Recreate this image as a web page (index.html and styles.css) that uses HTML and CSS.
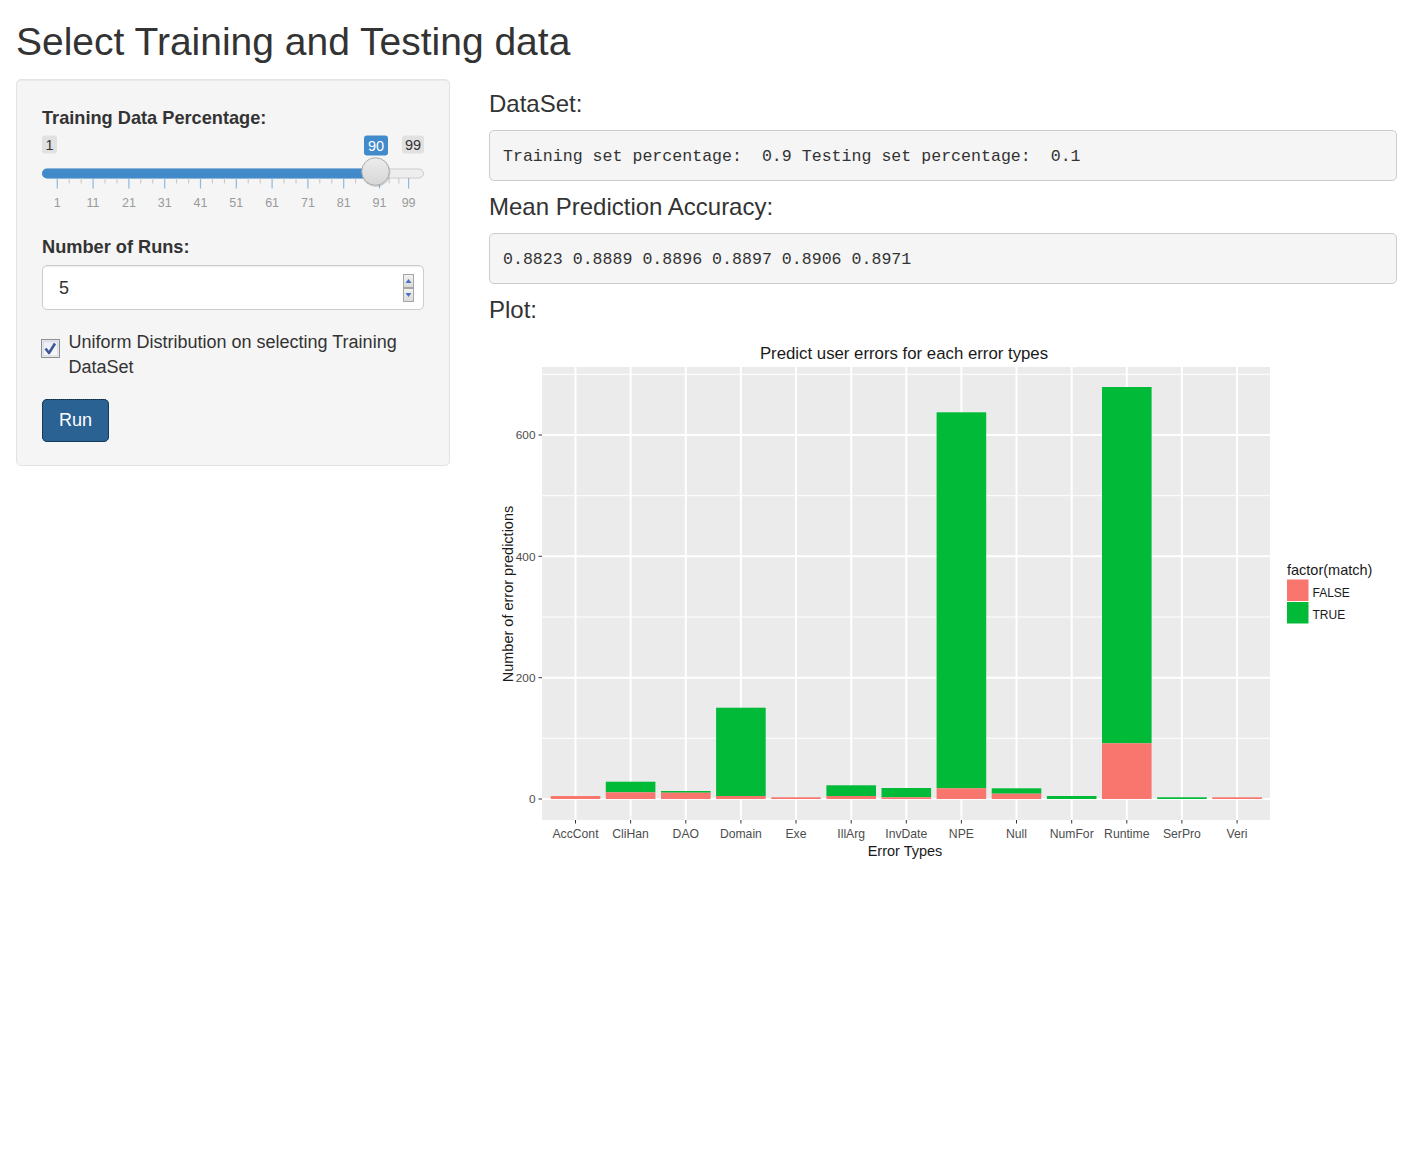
FILE: index.html
```html
<!DOCTYPE html>
<html lang="en">
<head>
<meta charset="utf-8">
<title>Select Training and Testing data</title>
<link rel="stylesheet" href="styles.css">
</head>
<body>
<div class="page">
  <h2 class="title">Select Training and Testing data</h2>
  <div class="layout">
    <aside class="well">
      <div class="label first-label">Training Data Percentage:</div>
      <svg class="slider" width="382" height="84.5" viewBox="42 130.5 382 84.5">
        <defs>
          <linearGradient id="hg" x1="0" y1="0" x2="0" y2="1">
            <stop offset="0" stop-color="#ececec"/>
            <stop offset="1" stop-color="#d6d6d6"/>
          </linearGradient>
        </defs>
        <rect x="42" y="135" width="15" height="18" rx="3" fill="#e1e1e1"/>
        <text x="49.5" y="149.5" class="sl-val">1</text>
        <rect x="364" y="135" width="24" height="20" rx="3" fill="#428bca"/>
        <text x="376" y="150.5" class="sl-val sl-cur">90</text>
        <rect x="402" y="135" width="22" height="18" rx="3" fill="#e1e1e1"/>
        <text x="413" y="149.5" class="sl-val">99</text>
        <rect x="42.5" y="168.5" width="381" height="9" rx="4.5" fill="#eeeeee" stroke="#cccccc"/>
        <rect x="42" y="168" width="336" height="10" rx="5" fill="#428bca"/>
        <g class="minor">
          <line x1="69.2" y1="177.5" x2="69.2" y2="183"/><line x1="81.2" y1="177.5" x2="81.2" y2="183"/>
          <line x1="105" y1="177.5" x2="105" y2="183"/><line x1="117" y1="177.5" x2="117" y2="183"/>
          <line x1="140.8" y1="177.5" x2="140.8" y2="183"/><line x1="152.8" y1="177.5" x2="152.8" y2="183"/>
          <line x1="176.6" y1="177.5" x2="176.6" y2="183"/><line x1="188.6" y1="177.5" x2="188.6" y2="183"/>
          <line x1="212.4" y1="177.5" x2="212.4" y2="183"/><line x1="224.4" y1="177.5" x2="224.4" y2="183"/>
          <line x1="248.2" y1="177.5" x2="248.2" y2="183"/><line x1="260.2" y1="177.5" x2="260.2" y2="183"/>
          <line x1="284" y1="177.5" x2="284" y2="183"/><line x1="296" y1="177.5" x2="296" y2="183"/>
          <line x1="319.8" y1="177.5" x2="319.8" y2="183"/><line x1="331.8" y1="177.5" x2="331.8" y2="183"/>
          <line x1="355.6" y1="177.5" x2="355.6" y2="183"/><line x1="367.6" y1="177.5" x2="367.6" y2="183"/>
          <line x1="389.2" y1="177.5" x2="389.2" y2="183"/><line x1="398.9" y1="177.5" x2="398.9" y2="183"/>
        </g>
        <g class="major">
          <line x1="57.3" y1="177.5" x2="57.3" y2="188"/>
          <line x1="93.1" y1="177.5" x2="93.1" y2="188"/>
          <line x1="128.9" y1="177.5" x2="128.9" y2="188"/>
          <line x1="164.7" y1="177.5" x2="164.7" y2="188"/>
          <line x1="200.5" y1="177.5" x2="200.5" y2="188"/>
          <line x1="236.3" y1="177.5" x2="236.3" y2="188"/>
          <line x1="272.1" y1="177.5" x2="272.1" y2="188"/>
          <line x1="307.9" y1="177.5" x2="307.9" y2="188"/>
          <line x1="343.7" y1="177.5" x2="343.7" y2="188"/>
          <line x1="379.5" y1="177.5" x2="379.5" y2="188"/>
          <line x1="408.6" y1="177.5" x2="408.6" y2="188"/>
        </g>
        <g class="ticklbl">
          <text x="57.3" y="206">1</text>
          <text x="93.1" y="206">11</text>
          <text x="128.9" y="206">21</text>
          <text x="164.7" y="206">31</text>
          <text x="200.5" y="206">41</text>
          <text x="236.3" y="206">51</text>
          <text x="272.1" y="206">61</text>
          <text x="307.9" y="206">71</text>
          <text x="343.7" y="206">81</text>
          <text x="379.5" y="206">91</text>
          <text x="408.6" y="206">99</text>
        </g>
        <circle cx="376" cy="172" r="14.5" fill="rgba(0,0,0,0.12)"/>
        <circle cx="375.5" cy="171" r="13.8" fill="url(#hg)" stroke="#ababab"/>
      </svg>
      <div class="label runs-label">Number of Runs:</div>
      <div class="numinput">
        <span class="numval">5</span>
        <svg class="spin" width="11" height="28" viewBox="0 0 11 28">
          <defs>
            <linearGradient id="sg" x1="0" y1="0" x2="0" y2="1">
              <stop offset="0" stop-color="#f3f3f3"/>
              <stop offset="1" stop-color="#d9d9d9"/>
            </linearGradient>
          </defs>
          <rect x="0.5" y="0.5" width="10" height="13" fill="url(#sg)" stroke="#a6a6a6"/>
          <rect x="0.5" y="14.5" width="10" height="13" fill="url(#sg)" stroke="#a6a6a6"/>
          <path d="M2.5 9 L5.5 5 L8.5 9 Z" fill="#4f6fc6"/>
          <path d="M2.5 19 L8.5 19 L5.5 23 Z" fill="#4f6fc6"/>
        </svg>
      </div>
      <div class="check">
        <svg class="cb" width="19" height="19" viewBox="0 0 19 19">
          <defs>
            <linearGradient id="cg" x1="0" y1="0" x2="0" y2="1">
              <stop offset="0" stop-color="#e9ecf3"/>
              <stop offset="1" stop-color="#f8f9fb"/>
            </linearGradient>
          </defs>
          <rect x="0.5" y="0.5" width="18" height="18" fill="#ffffff" stroke="#8e8f8f"/>
          <rect x="2" y="2" width="15" height="15" fill="url(#cg)" stroke="#c8ccd6"/>
          <path d="M4.5 9.5 L8 14 L14 4.5" fill="none" stroke="#3d579b" stroke-width="2.6" stroke-linejoin="round"/>
        </svg>
        <span class="check-text">Uniform Distribution on selecting Training DataSet</span>
      </div>
      <button class="run" type="button">Run</button>
    </aside>

    <main class="main">
      <h3 class="heading">DataSet:</h3>
      <pre class="out">Training set percentage:  0.9 Testing set percentage:  0.1</pre>
      <h3 class="heading">Mean Prediction Accuracy:</h3>
      <pre class="out">0.8823 0.8889 0.8896 0.8897 0.8906 0.8971</pre>
      <h3 class="heading">Plot:</h3>
      <svg class="plot" width="908" height="540" viewBox="489 330 908 540">
        <text class="p-title" x="904" y="359">Predict user errors for each error types</text>
        <rect x="542" y="367" width="728" height="453" fill="#ebebeb"/>
        <g class="g-minor">
          <line x1="542" y1="738.3" x2="1270" y2="738.3"/>
          <line x1="542" y1="617" x2="1270" y2="617"/>
          <line x1="542" y1="495.7" x2="1270" y2="495.7"/>
          <line x1="542" y1="374.3" x2="1270" y2="374.3"/>
        </g>
        <g class="g-major">
          <line x1="542" y1="799" x2="1270" y2="799"/>
          <line x1="542" y1="677.7" x2="1270" y2="677.7"/>
          <line x1="542" y1="556.3" x2="1270" y2="556.3"/>
          <line x1="542" y1="435" x2="1270" y2="435"/>
          <line x1="575.5" y1="367" x2="575.5" y2="820"/>
          <line x1="630.6" y1="367" x2="630.6" y2="820"/>
          <line x1="685.8" y1="367" x2="685.8" y2="820"/>
          <line x1="740.9" y1="367" x2="740.9" y2="820"/>
          <line x1="796" y1="367" x2="796" y2="820"/>
          <line x1="851.2" y1="367" x2="851.2" y2="820"/>
          <line x1="906.3" y1="367" x2="906.3" y2="820"/>
          <line x1="961.4" y1="367" x2="961.4" y2="820"/>
          <line x1="1016.5" y1="367" x2="1016.5" y2="820"/>
          <line x1="1071.7" y1="367" x2="1071.7" y2="820"/>
          <line x1="1126.8" y1="367" x2="1126.8" y2="820"/>
          <line x1="1181.9" y1="367" x2="1181.9" y2="820"/>
          <line x1="1237.1" y1="367" x2="1237.1" y2="820"/>
        </g>
        <g class="bars-true">
          <rect x="605.8" y="781.7" width="49.6" height="10.6"/>
          <rect x="661" y="791" width="49.6" height="1.7"/>
          <rect x="716.1" y="707.7" width="49.6" height="88.3"/>
          <rect x="826.4" y="785.3" width="49.6" height="10.7"/>
          <rect x="881.5" y="788" width="49.6" height="9.3"/>
          <rect x="936.6" y="412.3" width="49.6" height="376"/>
          <rect x="991.7" y="788.3" width="49.6" height="5.4"/>
          <rect x="1046.9" y="796" width="49.6" height="3"/>
          <rect x="1102" y="387" width="49.6" height="356.3"/>
          <rect x="1157.1" y="797.3" width="49.6" height="1.7"/>
        </g>
        <g class="bars-false">
          <rect x="550.7" y="796" width="49.6" height="3"/>
          <rect x="605.8" y="792.3" width="49.6" height="6.7"/>
          <rect x="661" y="792.7" width="49.6" height="6.3"/>
          <rect x="716.1" y="796" width="49.6" height="3"/>
          <rect x="771.2" y="797.3" width="49.6" height="1.7"/>
          <rect x="826.4" y="796" width="49.6" height="3"/>
          <rect x="881.5" y="797.3" width="49.6" height="1.7"/>
          <rect x="936.6" y="788.3" width="49.6" height="10.7"/>
          <rect x="991.7" y="793.7" width="49.6" height="5.3"/>
          <rect x="1102" y="743.3" width="49.6" height="55.7"/>
          <rect x="1212.3" y="797.3" width="49.6" height="1.7"/>
        </g>
        <g class="ticks">
          <line x1="538.5" y1="799" x2="542" y2="799"/>
          <line x1="538.5" y1="677.7" x2="542" y2="677.7"/>
          <line x1="538.5" y1="556.3" x2="542" y2="556.3"/>
          <line x1="538.5" y1="435" x2="542" y2="435"/>
          <line x1="575.5" y1="820" x2="575.5" y2="823.5"/>
          <line x1="630.6" y1="820" x2="630.6" y2="823.5"/>
          <line x1="685.8" y1="820" x2="685.8" y2="823.5"/>
          <line x1="740.9" y1="820" x2="740.9" y2="823.5"/>
          <line x1="796" y1="820" x2="796" y2="823.5"/>
          <line x1="851.2" y1="820" x2="851.2" y2="823.5"/>
          <line x1="906.3" y1="820" x2="906.3" y2="823.5"/>
          <line x1="961.4" y1="820" x2="961.4" y2="823.5"/>
          <line x1="1016.5" y1="820" x2="1016.5" y2="823.5"/>
          <line x1="1071.7" y1="820" x2="1071.7" y2="823.5"/>
          <line x1="1126.8" y1="820" x2="1126.8" y2="823.5"/>
          <line x1="1181.9" y1="820" x2="1181.9" y2="823.5"/>
          <line x1="1237.1" y1="820" x2="1237.1" y2="823.5"/>
        </g>
        <g class="ylbl">
          <text x="535.5" y="803.3">0</text>
          <text x="535.5" y="682">200</text>
          <text x="535.5" y="560.6">400</text>
          <text x="535.5" y="439.3">600</text>
        </g>
        <g class="xlbl">
          <text x="575.5" y="837.5">AccCont</text>
          <text x="630.6" y="837.5">CliHan</text>
          <text x="685.8" y="837.5">DAO</text>
          <text x="740.9" y="837.5">Domain</text>
          <text x="796" y="837.5">Exe</text>
          <text x="851.2" y="837.5">IllArg</text>
          <text x="906.3" y="837.5">InvDate</text>
          <text x="961.4" y="837.5">NPE</text>
          <text x="1016.5" y="837.5">Null</text>
          <text x="1071.7" y="837.5">NumFor</text>
          <text x="1126.8" y="837.5">Runtime</text>
          <text x="1181.9" y="837.5">SerPro</text>
          <text x="1237.1" y="837.5">Veri</text>
        </g>
        <text class="axis-title" x="905" y="856">Error Types</text>
        <text class="axis-title" transform="translate(513 594) rotate(-90)">Number of error predictions</text>
        <text class="leg-title" x="1287" y="575">factor(match)</text>
        <rect x="1287" y="579.5" width="21.5" height="21.5" fill="#f8766d"/>
        <rect x="1287" y="602" width="21.5" height="21.5" fill="#00ba38"/>
        <text class="leg-lbl" x="1312.5" y="596.5">FALSE</text>
        <text class="leg-lbl" x="1312.5" y="619">TRUE</text>
      </svg>
    </main>
  </div>
</div>
</body>
</html>
```

FILE: styles.css
```css
html, body {
  margin: 0;
  padding: 0;
  background: #ffffff;
}

body {
  font-family: "Liberation Sans", Arial, Helvetica, sans-serif;
  font-size: 18px;
  line-height: 25px;
  color: #333333;
}

.page {
  padding: 0 14px 40px 16px;
}

.title {
  margin: 21px 0 16px 0;
  font-size: 39px;
  line-height: 42px;
  font-weight: normal;
  color: #333333;
}

.layout {
  display: grid;
  grid-template-columns: 434px 908px;
  column-gap: 39px;
  align-items: start;
}

/* ---------- sidebar ---------- */
.well {
  background: #f5f5f5;
  border: 1px solid #e3e3e3;
  border-radius: 5px;
  box-shadow: inset 0 1px 1px rgba(0, 0, 0, 0.05);
  padding: 24px 25px 23px 25px;
  display: flex;
  flex-direction: column;
  align-items: flex-start;
}

.label {
  font-weight: bold;
  font-size: 18.2px;
  line-height: 25px;
}

.first-label {
  margin-top: 1.5px;
}

.slider {
  display: block;
  overflow: visible;
}

.sl-val {
  font-family: "Liberation Sans", Arial, sans-serif;
  font-size: 14.5px;
  text-anchor: middle;
  fill: #333333;
}

.sl-cur {
  fill: #ffffff;
}

.minor line {
  stroke: #c4c4c4;
  stroke-width: 1;
}

.major line {
  stroke: #8fb8e2;
  stroke-width: 1.2;
}

.ticklbl text {
  font-family: "Liberation Sans", Arial, sans-serif;
  font-size: 12.5px;
  text-anchor: middle;
  fill: #9a9a9a;
}

.runs-label {
  margin-top: 20px;
}

.numinput {
  margin-top: 5px;
  box-sizing: border-box;
  width: 382px;
  height: 45px;
  background: #ffffff;
  border: 1px solid #cccccc;
  border-radius: 5px;
  box-shadow: inset 0 1px 1px rgba(0, 0, 0, 0.075);
  display: flex;
  align-items: center;
  justify-content: space-between;
  padding: 0 9px 0 16px;
}

.numval {
  font-size: 18px;
  line-height: 25px;
  padding-top: 1px;
}

.spin {
  display: block;
  margin-top: 1px;
}

.check {
  margin-top: 20px;
  display: flex;
  align-items: flex-start;
  width: 382px;
}

.cb {
  flex: none;
  display: block;
  margin: 8.5px 0 0 -1px;
}

.check-text {
  margin-left: 8.5px;
  font-size: 18px;
  line-height: 25px;
}

.run {
  margin-top: 19px;
  box-sizing: border-box;
  height: 43px;
  width: 67px;
  padding: 0;
  font-family: "Liberation Sans", Arial, sans-serif;
  font-size: 18px;
  color: #ffffff;
  background: #2a6294;
  border: 1px solid #1d4a71;
  border-radius: 5px;
  outline: 1px dotted #0e2a44;
  outline-offset: -1px;
}

/* ---------- main ---------- */
.main {
  padding-top: 12px;
  display: flex;
  flex-direction: column;
}

.heading {
  margin: 0 0 13px 0;
  font-size: 24px;
  line-height: 26px;
  font-weight: normal;
  color: #333333;
}

.out {
  margin: 0 0 13px 0;
  box-sizing: border-box;
  height: 51px;
  padding: 13px 13px 11px 13px;
  background: #f5f5f5;
  border: 1px solid #cccccc;
  border-radius: 5px;
  font-family: "Liberation Mono", "Courier New", monospace;
  font-size: 16.6px;
  line-height: 25px;
  color: #333333;
  white-space: pre;
  overflow: hidden;
}

.plot {
  display: block;
  margin-top: -6px;
  font-family: "Liberation Sans", Arial, sans-serif;
}

.p-title {
  font-size: 16.8px;
  text-anchor: middle;
  fill: #1a1a1a;
}

.g-minor line {
  stroke: #ffffff;
  stroke-width: 1;
}

.g-major line {
  stroke: #ffffff;
  stroke-width: 2;
}

.bars-true rect {
  fill: #00ba38;
}

.bars-false rect {
  fill: #f8766d;
}

.ticks line {
  stroke: #333333;
  stroke-width: 1;
}

.ylbl text {
  font-size: 11.8px;
  text-anchor: end;
  fill: #4d4d4d;
}

.xlbl text {
  font-size: 12.2px;
  text-anchor: middle;
  fill: #4d4d4d;
}

.axis-title {
  font-size: 14.5px;
  text-anchor: middle;
  fill: #1a1a1a;
}

.leg-title {
  font-size: 14.5px;
  fill: #1a1a1a;
}

.leg-lbl {
  font-size: 12px;
  fill: #1a1a1a;
}
```
